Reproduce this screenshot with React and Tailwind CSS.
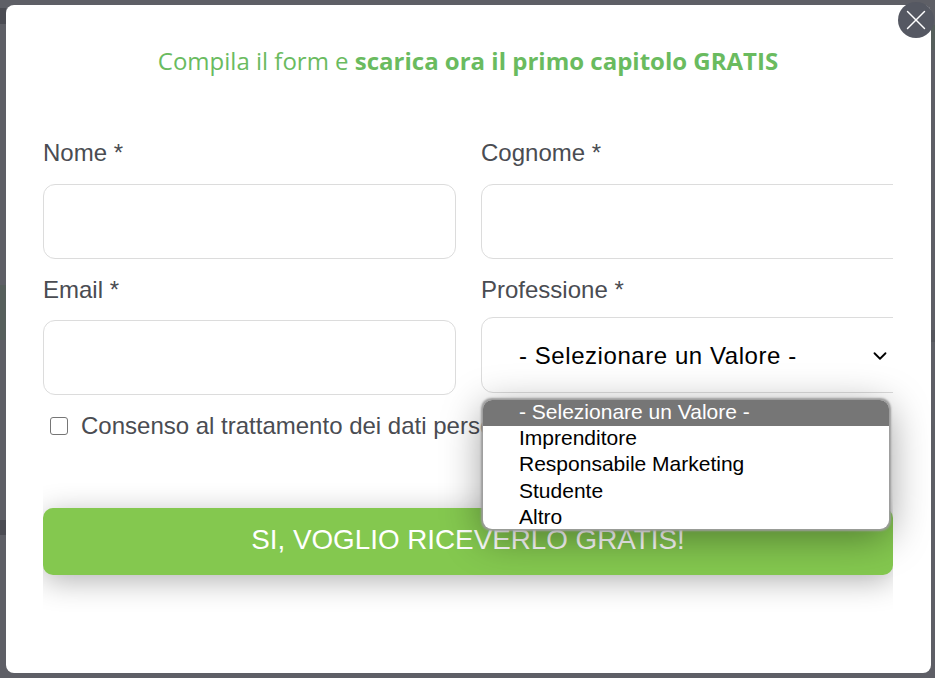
import { ChevronDown, X } from 'lucide-react'

const sans = "font-['Liberation_Sans',Arial,sans-serif]"

function Field({ label, gap = 'mb-[17px]', className = '' }) {
    return (
        <div className={`flex flex-col ${className}`}>
            <label className={`text-[24px] leading-[28px] text-[#4a4c52] ${gap}`}>{label}</label>
            <input type="text" className="w-full h-[75px] rounded-[12px] border border-[#dcdcdc] bg-white outline-none" />
        </div>
    )
}

export default function App() {
    return (
        <div className={`relative w-[935px] h-[678px] overflow-hidden bg-[#5e5f66] ${sans}`}>
            {/* page behind the overlay, only slivers show */}
            <div className="absolute left-0 top-[8px] w-[6px] h-[16px] bg-[#4b4c53]" />
            <div className="absolute left-0 top-[520px] w-[6px] h-[15px] bg-[#4b4c53]" />
            <div className="absolute left-0 top-[285px] w-[6px] h-[55px] bg-[#565f5c]" />
            <div className="absolute right-0 top-[25px] w-[4px] h-[25px] bg-[#565f5c]" />
            <div className="absolute right-0 top-[330px] w-[4px] h-[12px] bg-[#55565d]" />

            <div className="relative ml-[6px] mt-[5px] w-[925px] h-[668px] rounded-[8px] bg-white pt-[39px] pl-[37px]">
                <h2 className="w-[850px] text-center font-['Open_Sans',sans-serif] text-[24px] leading-[33px] text-[#6abb5f]">
                    Compila il form e <b className="font-bold">scarica ora il primo capitolo GRATIS</b>
                </h2>

                {/* form, right column runs past the clip edge */}
                <div className="w-[850px] overflow-hidden mt-[62px] pb-[100px]">
                    <div className="w-[900px] grid grid-cols-[413px_430px] gap-x-[25px]">
                        <Field label="Nome *" />
                        <Field label="Cognome *" />
                        <Field label="Email *" gap="mb-[16px]" className="mt-[17px]" />
                        <div className="flex flex-col mt-[17px]">
                            <label className="text-[24px] leading-[28px] text-[#4a4c52] mb-[13px]">Professione *</label>
                            <div className="w-full h-[76px] pt-px rounded-[12px] border border-[#dcdcdc] bg-white flex items-center pl-[37px] text-[24px] tracking-[0.56px] text-black">
                                <span>- Selezionare un Valore -</span>
                            </div>
                        </div>
                    </div>

                    <div className="flex items-center mt-[17px] pl-[7px] h-[28px] text-[24px] text-[#4a4c52] whitespace-nowrap">
                        <span className="w-[18px] h-[18px] rounded-[3px] border border-[#767676] bg-white mr-[13px]" />
                        Consenso al trattamento dei dati personali
                    </div>

                    <button className="block w-full h-[67px] mt-[68px] pb-[3px] rounded-[10px] bg-[#84c84f] text-[27.8px] text-white shadow-[0_6px_30px_rgba(0,0,0,0.3)]">
                        SI, VOGLIO RICEVERLO GRATIS!
                    </button>
                </div>

                <ChevronDown className="absolute left-[863px] top-[340px] w-[22px] h-[22px] text-black" strokeWidth={2} />

                {/* open select list */}
                <ul className="absolute left-[477px] top-[395px] w-[406px] h-[129px] overflow-hidden rounded-[9px] bg-white text-[21px] text-black shadow-[0_0_2px_1.5px_#9c9c9c,0_8px_40px_rgba(0,0,0,0.4)]">
                    <li className="bg-[#767676] pl-[36px] h-[26px] leading-[24px] text-white">- Selezionare un Valore -</li>
                    <li className="pl-[36px] h-[26px] leading-[24px]">Imprenditore</li>
                    <li className="pl-[36px] h-[26px] leading-[24px]">Responsabile Marketing</li>
                    <li className="pl-[36px] h-[27px] leading-[26px]">Studente</li>
                    <li className="pl-[36px] h-[24px] leading-[24px]">Altro</li>
                </ul>
            </div>

            <button className="absolute left-[898px] top-[2px] w-[36px] h-[36px] rounded-full bg-[#555862] flex items-center justify-center text-white">
                <X className="w-[34px] h-[34px]" strokeWidth={1} />
            </button>
        </div>
    )
}
